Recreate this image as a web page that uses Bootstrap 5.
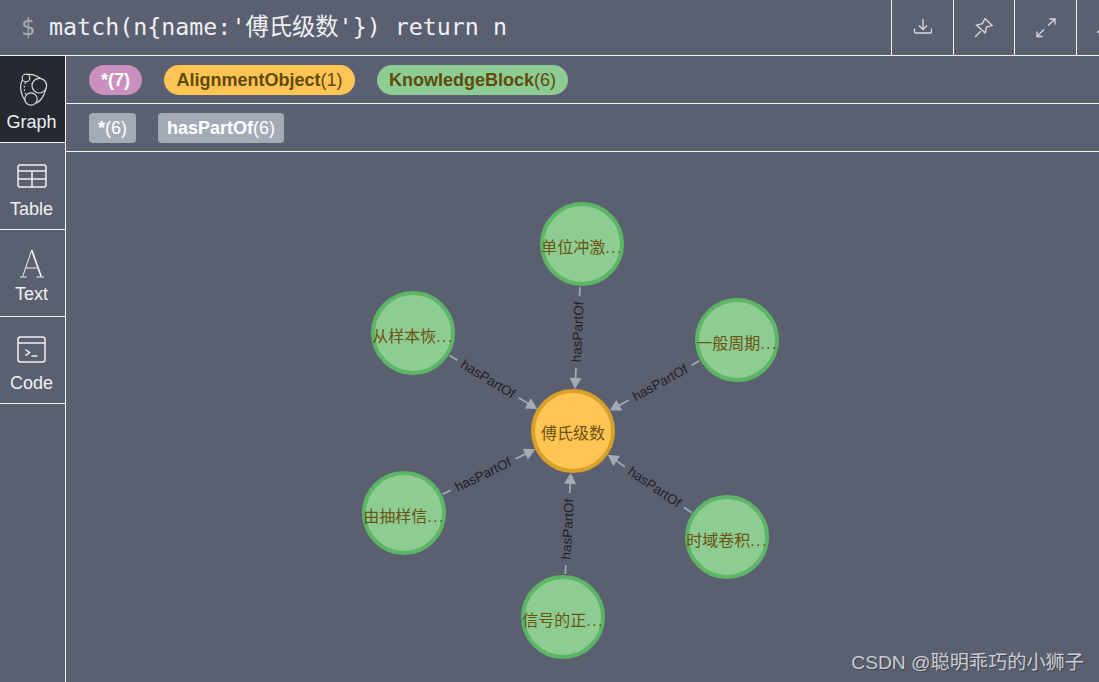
<!DOCTYPE html>
<html lang="en">
<head>
  <meta charset="UTF-8">
  <title>Neo4j Browser</title>
  <link href="https://cdn.jsdelivr.net/npm/bootstrap@5.3.3/dist/css/bootstrap.min.css" rel="stylesheet">
  <style>
    body {
      background: #5b6070;
      font-family: "Liberation Sans", "Noto Sans CJK SC", sans-serif;
      color: #eef0f2;
    }
    .frame-line { border-color: #f2f3f5 !important; }
    .top-bar { height: 56px; }
    .query-text {
      flex: 0 0 891px;
      padding: 11px 0 0 21px;
      font: 23.3px/32px "DejaVu Sans Mono", "Noto Sans CJK SC", monospace;
      color: #eef0f2;
      white-space: nowrap;
    }
    .query-text .prompt { color: #a9adb6; }
    .top-btn {
      flex: 0 0 61.67px;
      border-left: 1px solid #f2f3f5;
      display: flex;
      align-items: center;
      justify-content: center;
    }
    .top-btn svg { fill: none; stroke: #d9dbe0; stroke-width: 1.3; }
    .side-bar { flex: 0 0 66px; }
    .side-item {
      height: 87px;
      padding-right: 2px;
      font-size: 18px;
      line-height: 20px;
      color: #eef0f2;
    }
    .side-item.is-active { background: #272930; }
    .side-item svg { fill: none; stroke: #eef0f2; stroke-width: 1.5; display: block; margin-top: 2px; }
    .side-icon { height: 42px; margin-bottom: 3px; }
    .is-active .side-icon svg { margin-top: -1px; stroke: #d8dade; stroke-width: 1.2; }
    .side-item.is-text .side-icon { margin-bottom: -1px; }
    .side-item.is-text svg { stroke-width: 1; margin-top: 0; }
    .side-item.is-text .letter-heavy { stroke-width: 1.7; }
    .legend-row { height: 48px; padding: 9px 0 0 23px; gap: 22px; }
    .legend-pill {
      height: 30px;
      font-size: 18px;
      font-weight: 400;
      line-height: 30px;
      padding: 0 12.5px;
    }
    .legend-pill b { font-weight: 700; }
    .pill-pink { background: #c990c0; color: #fff; padding: 0 12px; }
    .pill-orange { background: #ffc454; color: #604a0e; }
    .pill-green { background: #8dcc93; color: #604a0e; padding: 0 12px; }
    .pill-rel { background: #a5abb6; color: #fff; padding: 0 9px; border-radius: 4px; }
    .graph-area { min-height: 0; }
    .graph-area svg { display: block; }
    .edge-line { stroke: #a5abb6; stroke-width: 1.7; fill: none; }
    .edge-head { fill: #a5abb6; }
    .edge-label { font: 13.5px "Liberation Sans", sans-serif; fill: #1f2026; text-anchor: middle; }
    .node-label { font: 16px "Liberation Sans", "Noto Sans CJK SC", sans-serif; fill: #6b5312; text-anchor: middle; }
    .node-label .dots { letter-spacing: 1.4px; }
    .watermark {
      position: absolute;
      right: 15px;
      bottom: 7px;
      font-size: 19.2px;
      line-height: 24px;
      color: #c9ccd2;
      text-shadow: 1px 1px 1px rgba(40, 42, 50, .6);
    }
  </style>
</head>
<body class="vh-100 overflow-hidden d-flex flex-column">

  <!-- query bar -->
  <div class="top-bar d-flex overflow-hidden border-bottom frame-line flex-shrink-0">
    <div class="query-text"><span class="prompt">$</span> match(n{name:'傅氏级数'}) return n</div>
    <div class="top-btn">
      <svg width="20" height="20" viewBox="0 0 20 20"><path d="M11 1v10M7 7.500l4 4 4-4M2.500 10.500v3.200c0 .8.5 1.300 1.300 1.300h14.400c.8 0 1.300-.5 1.300-1.300v-3.200"/></svg>
    </div>
    <div class="top-btn">
      <svg width="20" height="20" viewBox="0 0 20 20"><path d="M11 .5l7 7-5.600 1.600L11.200 15 2.500 7 8.400 5.600zM1 19l5.700-5.800"/></svg>
    </div>
    <div class="top-btn">
      <svg width="20" height="20" viewBox="0 0 20 20"><path d="M1 18.500l7-7M1 13.500v5h5.500M12 7.500l7-6.500M13.500 1H19v5.500"/></svg>
    </div>
    <div class="top-btn">
      <svg width="20" height="20" viewBox="0 0 20 20"><path d="M0 15L10 5l10 10"/></svg>
    </div>
  </div>

  <div class="d-flex flex-fill" style="min-height:0">
    <!-- view switcher -->
    <div class="side-bar d-flex flex-column border-end frame-line">
      <div class="side-item is-active d-flex flex-column align-items-center justify-content-center border-bottom frame-line">
        <div class="side-icon d-flex align-items-center">
          <svg width="34" height="38" viewBox="0 0 34 38">
            <path d="M12 6.500C19 5.500 28 10 30.500 17 32 24 26 33 21.500 35M7.500 12C4.500 17 5 26 10.500 33"/>
            <path d="M10.500 14.500C8.500 19 9 23 11 26.500" stroke-dasharray="1.500 2"/>
            <circle cx="11" cy="10" r="3.800" fill="#272930"/>
            <circle cx="24.300" cy="17.700" r="7.300" fill="#272930"/>
            <circle cx="16" cy="31" r="6.200" fill="#272930"/>
          </svg>
        </div>
        <span>Graph</span>
      </div>
      <div class="side-item d-flex flex-column align-items-center justify-content-center border-bottom frame-line">
        <div class="side-icon d-flex align-items-center">
          <svg width="30" height="24" viewBox="0 0 30 24">
            <rect x="1" y="1" width="28" height="22" rx="2"/>
            <path d="M1 7h28M1 15h28M15 7v16"/>
          </svg>
        </div>
        <span>Table</span>
      </div>
      <div class="side-item is-text d-flex flex-column align-items-center justify-content-center border-bottom frame-line">
        <div class="side-icon d-flex align-items-center">
          <svg width="26" height="30" viewBox="0 0 26 30">
            <path d="M12.700 1L3.700 27.500M6.500 19h12M1 28h6.500M17.500 28H25"/>
            <path class="letter-heavy" d="M12.700 1l9.500 26.500"/>
          </svg>
        </div>
        <span>Text</span>
      </div>
      <div class="side-item d-flex flex-column align-items-center justify-content-center border-bottom frame-line">
        <div class="side-icon d-flex align-items-center">
          <svg width="29" height="27" viewBox="0 0 29 27">
            <rect x="1" y="1" width="27" height="25" rx="2.500"/>
            <path d="M1 7h27M8.500 13.500l4 3-4 3.200M14.500 20h6"/>
          </svg>
        </div>
        <span>Code</span>
      </div>
    </div>

    <!-- result -->
    <div class="flex-fill d-flex flex-column position-relative" style="min-width:0">
      <div class="legend-row d-flex align-items-start border-bottom frame-line flex-shrink-0">
        <span class="badge rounded-pill legend-pill pill-pink"><b>*(7)</b></span>
        <span class="badge rounded-pill legend-pill pill-orange"><b>AlignmentObject</b>(1)</span>
        <span class="badge rounded-pill legend-pill pill-green"><b>KnowledgeBlock</b>(6)</span>
      </div>
      <div class="legend-row d-flex align-items-start border-bottom frame-line flex-shrink-0">
        <span class="badge legend-pill pill-rel"><b>*</b>(6)</span>
        <span class="badge legend-pill pill-rel"><b>hasPartOf</b>(6)</span>
      </div>
      <div class="graph-area flex-fill">
        <svg id="graph" width="1033" height="530" viewBox="66 152 1033 530"></svg>
      </div>
      <div class="watermark">CSDN @聪明乖巧的小狮子</div>
    </div>
  </div>

  <script>
    // node centres taken from the picture, all edges point at the centre node
    const hub = { x: 573, y: 431, name: '傅氏级数' };
    const leaves = [
      { x: 582, y: 244, name: '单位冲激' },
      { x: 413, y: 333, name: '从样本恢' },
      { x: 737, y: 340, name: '一般周期' },
      { x: 404, y: 513, name: '由抽样信' },
      { x: 727, y: 537, name: '时域卷积' },
      { x: 563, y: 617, name: '信号的正' }
    ];

    let edges = '';
    leaves.forEach(n => {
      const dx = hub.x - n.x, dy = hub.y - n.y;
      const d = Math.hypot(dx, dy);
      const a = Math.atan2(dy, dx) * 180 / Math.PI;
      const flip = Math.abs(a) > 90 ? 180 : 0;
      const tip = d - 42;
      edges += `<g transform="translate(${n.x} ${n.y}) rotate(${a})">
        <path class="edge-line" d="M43 0H52M124 0H${tip - 8}"/>
        <path class="edge-head" d="M${tip} 0L${tip - 11} -6V6Z"/>
        <text class="edge-label" transform="translate(88 0) rotate(${flip})" y="4.500">hasPartOf</text>
      </g>`;
    });

    const circle = (n, fill, stroke, dy, dots) =>
      `<circle cx="${n.x}" cy="${n.y}" r="40" fill="${fill}" stroke="${stroke}" stroke-width="4"/>
       <text class="node-label" x="${n.x}" y="${n.y + dy}">${n.name}${dots ? '<tspan class="dots">...</tspan>' : ''}</text>`;

    document.getElementById('graph').innerHTML = edges +
      leaves.map(n => circle(n, '#8dcc93', '#5db665', 9, true)).join('') +
      circle(hub, '#ffc454', '#d9a02a', 8, false);
  </script>
  <script src="https://cdn.jsdelivr.net/npm/bootstrap@5.3.3/dist/js/bootstrap.bundle.min.js"></script>
</body>
</html>
